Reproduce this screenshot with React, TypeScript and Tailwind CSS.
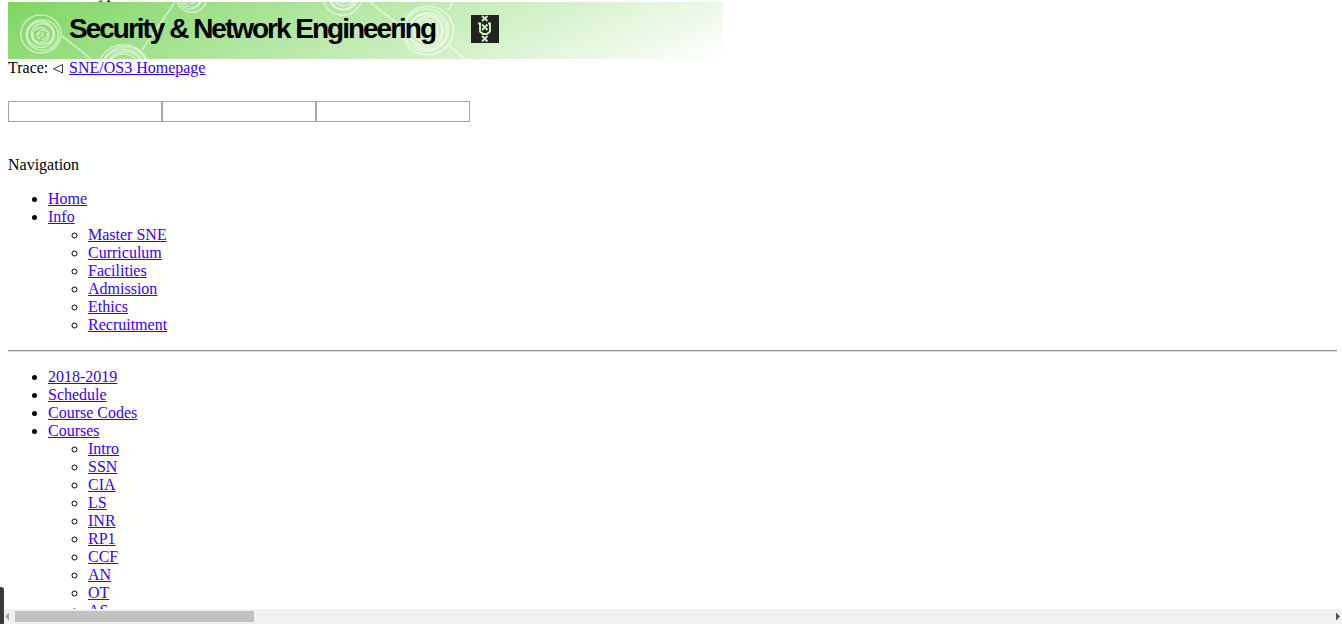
import React from "react";

function Link({ children }: { children: React.ReactNode }) {
  return (
    <a href="#" className="text-[#3800f0] underline">
      {children}
    </a>
  );
}

function SubList({ items }: { items: string[] }) {
  return (
    <ul className="list-[circle] pl-10">
      {items.map((t) => (
        <li key={t}>
          <Link>{t}</Link>
        </li>
      ))}
    </ul>
  );
}

function Rings({ x, y, radii }: { x: number; y: number; radii: number[] }) {
  return (
    <g>
      {radii.map((r, i) => (
        <ellipse
          key={r}
          cx={x + (i % 2 ? 0.8 : -0.6)}
          cy={y + (i % 3) * 0.5}
          rx={r}
          ry={r * 0.95}
          strokeDasharray={r < 10 ? `${r * 1.6} 1.5` : undefined}
        />
      ))}
    </g>
  );
}

function Banner() {
  return (
    <svg width="715" height="57" viewBox="0 0 715 57" className="block shrink-0">
      <defs>
        <linearGradient id="green" gradientUnits="userSpaceOnUse" x1="0" y1="0" x2="148" y2="320">
          <stop offset="0" stopColor="#7dd660" />
          <stop offset="1" stopColor="#ffffff" />
        </linearGradient>
      </defs>
      <rect width="715" height="57" fill="url(#green)" />
      <g fill="none" stroke="#ffffff" strokeOpacity="0.52" strokeWidth="1.7">
        <Rings x={33.5} y={32} radii={[2, 5, 8, 11, 13.5, 16, 20]} />
        <Rings x={116} y={66} radii={[15, 18, 21, 22.5, 25]} />
        <Rings x={183} y={-4} radii={[6, 9, 10.5, 15]} />
        <Rings x={335} y={-6} radii={[7, 10, 13, 14.5, 19.5]} />
        <Rings x={419} y={28} radii={[4, 8, 12, 14, 17, 19, 22, 25.5]} />
        <path d="M54 34L83 57M134 48L167 0M362 0L395 26M440 8L445 0M442 44L457 57" />
      </g>
      <text
        x="61"
        y="36"
        textLength="368"
        lengthAdjust="spacing"
        className="font-['Liberation_Sans',sans-serif] text-[28px] font-bold"
      >
        Security &amp; Network Engineering
      </text>
      <rect x="463" y="13" width="28" height="28" fill="#222222" />
      <g fill="none" stroke="#c9f3bd" strokeWidth="1.9">
        <path d="M474 14L479.500 19M479.500 14L474 19M474 22.500L479.500 28M479.500 22.500L474 28M474 34L479.500 39.500M479.500 34L474 39.500" />
        <path d="M470 21.500H473M472 21V29.500L475 32H479L482 29.500V21M480 21.500H483" />
      </g>
    </svg>
  );
}

export default function App() {
  return (
    <div className="relative flex h-[624px] w-[1342px] flex-col overflow-hidden bg-white font-['Liberation_Serif',serif] text-[16px] leading-[18px] text-black">
      <main className="h-[609px] overflow-hidden pl-2">
        <div className="flex h-[2px] items-end overflow-hidden pl-[82px]">
          <span className="leading-[18px]">Type</span>
        </div>
        <Banner />
        <div className="flex h-[18px]">
          <span className="w-[44px]">Trace:</span>
          <svg width="12" height="18" viewBox="0 0 12 18" className="mr-[5px]" fill="none" stroke="#222222" strokeWidth="0.9">
            <path d="M10.500 5.500V14L1.500 9.800Z" />
          </svg>
          <Link>SNE/OS3 Homepage</Link>
        </div>
        <div className="mt-6 flex">
          <div className="h-[21px] w-[154px] border border-[#a6a6a6]" />
          <div className="h-[21px] w-[154px] border border-[#a6a6a6]" />
          <div className="h-[21px] w-[154px] border border-[#a6a6a6]" />
        </div>
        <div className="mt-[34px]">Navigation</div>
        <ul className="mt-4 list-disc pl-10">
          <li>
            <Link>Home</Link>
          </li>
          <li>
            <Link>Info</Link>
            <SubList items={["Master SNE", "Curriculum", "Facilities", "Admission", "Ethics", "Recruitment"]} />
          </li>
        </ul>
        <div className="mt-4 h-[2px] w-[1329px] border-t border-b border-t-[#959595] border-b-[#e0e0e0]" />
        <ul className="mt-4 list-disc pl-10">
          {["2018-2019", "Schedule", "Course Codes"].map((t) => (
            <li key={t}>
              <Link>{t}</Link>
            </li>
          ))}
          <li>
            <Link>Courses</Link>
            <SubList items={["Intro", "SSN", "CIA", "LS", "INR", "RP1", "CCF", "AN", "OT", "AS"]} />
          </li>
        </ul>
      </main>
      <div className="flex h-[15px] items-center bg-[#f1f1f1] pl-1">
        <svg width="11" height="15" viewBox="0 0 11 15">
          <path d="M1 7.500L5 3.500V11.500Z" fill="#a3a3a3" />
        </svg>
        <div className="h-[11px] w-[239px] bg-[#c1c1c1]" />
        <svg width="6" height="15" viewBox="0 0 6 15" className="ml-auto">
          <path d="M0 3.500V11.500L4 7.500Z" fill="#505050" />
        </svg>
      </div>
      <div className="absolute bottom-0 left-0 h-[37px] w-1 rounded-tr-[3px] bg-[#353c39]" />
    </div>
  );
}
